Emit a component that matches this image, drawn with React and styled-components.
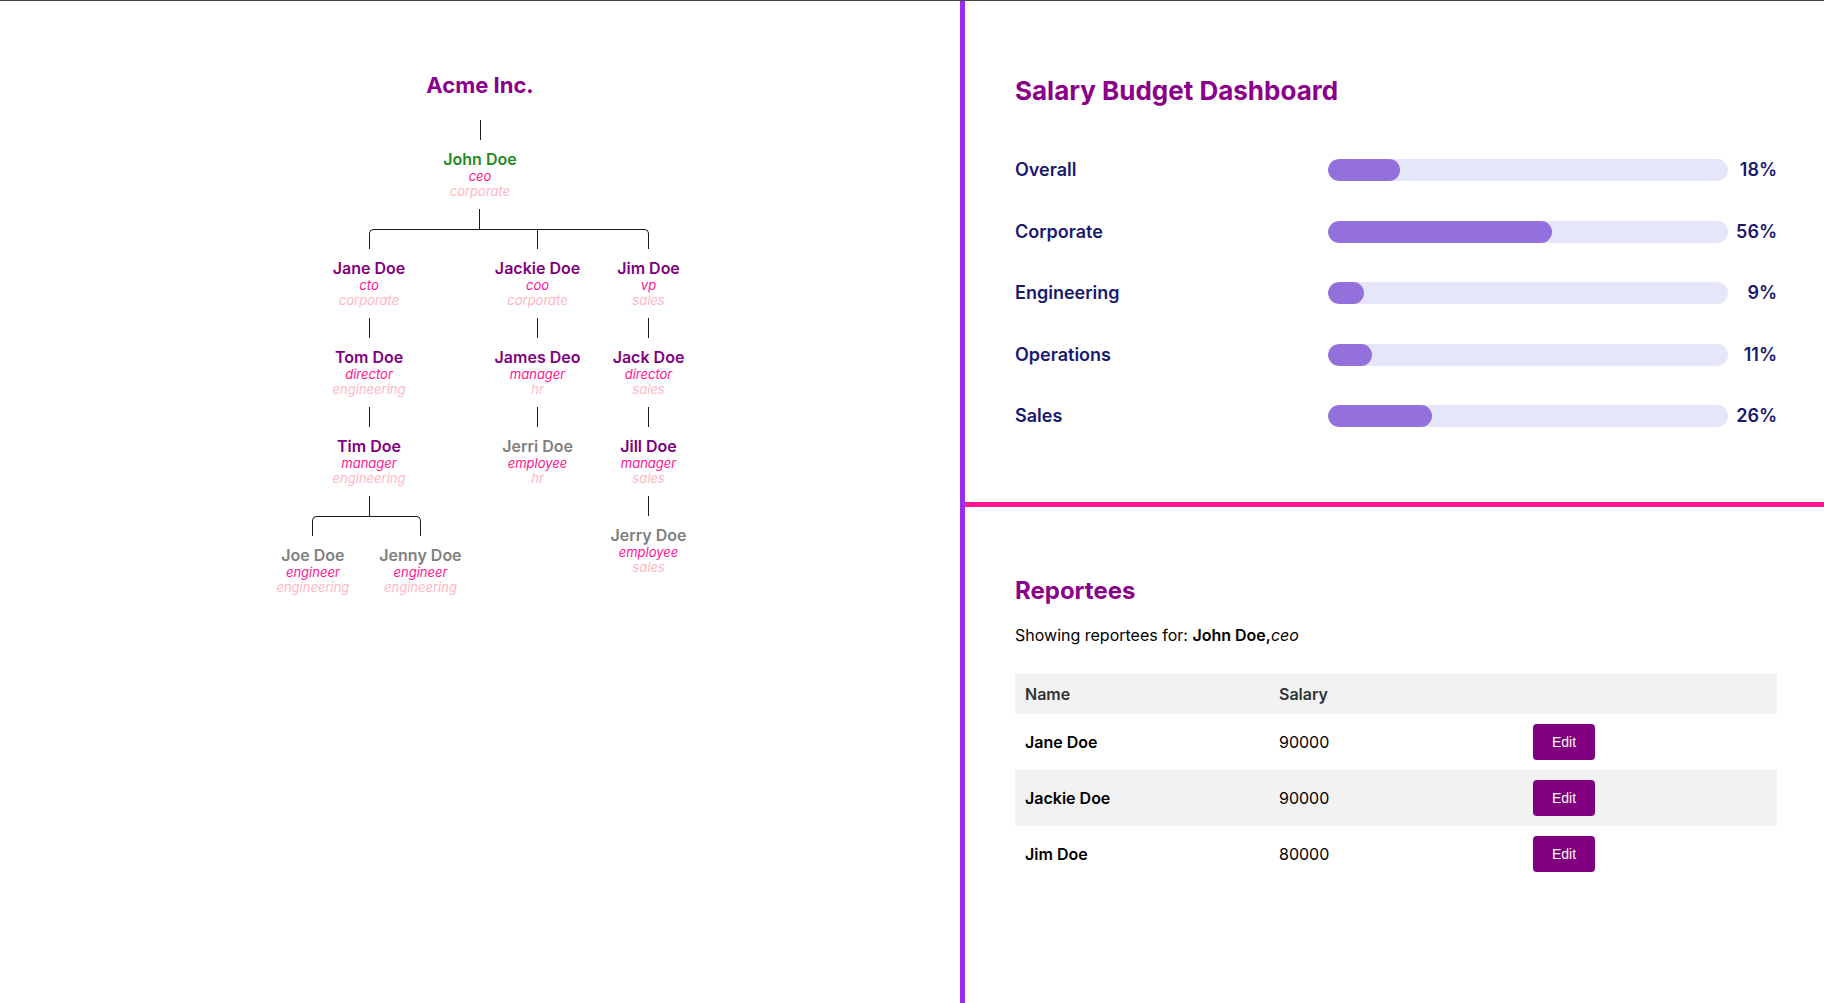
import React from 'react';
import styled, { createGlobalStyle } from 'styled-components';

const GlobalStyle = createGlobalStyle`
  html, body { margin: 0; padding: 0; background: #ffffff; }
  body { font-family: Inter, "Noto Sans", sans-serif; }
  * { box-sizing: border-box; }
`;

const LINE = '#1a1a1a';

const Page = styled.div`
  display: flex;
  min-height: 100vh;
  border-top: 1px solid #444444;
`;

const LeftPanel = styled.section`
  width: 960px;
  flex: none;
  display: flex;
  flex-direction: column;
  align-items: center;
  padding-top: 71px;
`;

const RightPanel = styled.section`
  flex: 1;
  display: flex;
  flex-direction: column;
  border-left: 5px solid rgb(151, 46, 237);
`;

const ChartTitle = styled.h1`
  margin: 0;
  padding-bottom: 21.5px;
  font-size: 22px;
  font-weight: 700;
  line-height: normal;
  color: #8b008b;
`;

const Stem = styled.div`
  width: 1px;
  height: 20px;
  background: ${LINE};
  flex: none;
`;

const NodeColumn = styled.div`
  display: flex;
  flex-direction: column;
  align-items: center;
  padding: 0 ${(p) => (p.$spaced ? 3 : 0)}px;
`;

const Label = styled.div`
  display: flex;
  flex-direction: column;
  align-items: center;
  padding: 10px 12px;
  white-space: nowrap;
`;

const NAME_COLORS = { selected: '#228b22', manager: '#800080', leaf: '#808080' };

const Name = styled.span`
  font-size: 16px;
  line-height: 19px;
  font-weight: 600;
  color: ${(p) => NAME_COLORS[p.$variant]};
`;

const Role = styled.span`
  font-size: 13px;
  line-height: 15px;
  font-style: italic;
  color: #ff1493;
`;

const Dept = styled.span`
  font-size: 13px;
  line-height: 15px;
  font-style: italic;
  color: #ffb6c1;
`;

const ChildrenRow = styled.div`
  display: flex;
  align-items: flex-start;
`;

const ChildWrap = styled.div`
  display: flex;
  flex-direction: column;
  align-items: stretch;
`;

const Connector = styled.div`
  display: flex;
  height: 20px;
`;

const Half = styled.div`
  flex: 1 1 0;
  border: 0 solid ${LINE};
  border-top-width: ${(p) => (p.$top ? '1px' : '0')};
  border-left-width: ${(p) => (p.$edge === 'left' ? '1px' : '0')};
  border-right-width: ${(p) => (p.$edge === 'right' ? '1px' : '0')};
  border-top-left-radius: ${(p) => (p.$round === 'tl' ? '5px' : '0')};
  border-top-right-radius: ${(p) => (p.$round === 'tr' ? '5px' : '0')};
`;

function ChildConnector({ index, count }) {
  const first = index === 0;
  const last = index === count - 1;
  if (first) {
    return (
      <Connector>
        <Half />
        <Half $top $edge="left" $round="tl" />
      </Connector>
    );
  }
  if (last) {
    return (
      <Connector>
        <Half $top $edge="right" $round="tr" />
        <Half />
      </Connector>
    );
  }
  return (
    <Connector>
      <Half $top $edge="right" />
      <Half $top />
    </Connector>
  );
}

function OrgNode({ node, spaced }) {
  const kids = node.children || [];
  const variant = node.selected ? 'selected' : kids.length ? 'manager' : 'leaf';
  return (
    <NodeColumn $spaced={spaced}>
      <Label>
        <Name $variant={variant}>{node.name}</Name>
        <Role>{node.role}</Role>
        <Dept>{node.dept}</Dept>
      </Label>
      {kids.length === 1 && (
        <>
          <Stem />
          <OrgNode node={kids[0]} />
        </>
      )}
      {kids.length > 1 && (
        <>
          <Stem />
          <ChildrenRow>
            {kids.map((k, i) => (
              <ChildWrap key={k.name}>
                <ChildConnector index={i} count={kids.length} />
                <OrgNode node={k} spaced />
              </ChildWrap>
            ))}
          </ChildrenRow>
        </>
      )}
    </NodeColumn>
  );
}

const tree = {
  name: 'John Doe', role: 'ceo', dept: 'corporate', selected: true,
  children: [
    { name: 'Jane Doe', role: 'cto', dept: 'corporate', children: [
      { name: 'Tom Doe', role: 'director', dept: 'engineering', children: [
        { name: 'Tim Doe', role: 'manager', dept: 'engineering', children: [
          { name: 'Joe Doe', role: 'engineer', dept: 'engineering' },
          { name: 'Jenny Doe', role: 'engineer', dept: 'engineering' },
        ] },
      ] },
    ] },
    { name: 'Jackie Doe', role: 'coo', dept: 'corporate', children: [
      { name: 'James Deo', role: 'manager', dept: 'hr', children: [
        { name: 'Jerri Doe', role: 'employee', dept: 'hr' },
      ] },
    ] },
    { name: 'Jim Doe', role: 'vp', dept: 'sales', children: [
      { name: 'Jack Doe', role: 'director', dept: 'sales', children: [
        { name: 'Jill Doe', role: 'manager', dept: 'sales', children: [
          { name: 'Jerry Doe', role: 'employee', dept: 'sales' },
        ] },
      ] },
    ] },
  ],
};

/* ---------- Right side ---------- */

const BudgetSection = styled.div`
  height: 506px;
  flex: none;
  border-bottom: 5px solid #ff1493;
  padding: 74px 47px 0 50px;
`;

const SectionTitle = styled.h2`
  margin: 0 0 ${(p) => p.$gap}px;
  font-size: ${(p) => p.$size}px;
  font-weight: 700;
  line-height: normal;
  color: #8b008b;
`;

const BudgetGrid = styled.div`
  display: grid;
  grid-template-columns: 313px 400px 1fr;
  row-gap: 39.5px;
  align-items: center;
`;

const BudgetLabel = styled.div`
  font-size: 18px;
  font-weight: 600;
  line-height: 22px;
  color: #191970;
`;

const Track = styled.div`
  height: 22px;
  border-radius: 11px;
  background: #e6e6fa;
  overflow: hidden;
`;

const Fill = styled.div`
  height: 100%;
  border-radius: 11px;
  background: #9370db;
`;

const BudgetValue = styled.div`
  font-size: 18px;
  font-weight: 600;
  line-height: 22px;
  text-align: right;
  color: #191970;
`;

const budgets = [
  { label: 'Overall', pct: 18 },
  { label: 'Corporate', pct: 56 },
  { label: 'Engineering', pct: 9 },
  { label: 'Operations', pct: 11 },
  { label: 'Sales', pct: 26 },
];

const ReporteesSection = styled.div`
  flex: 1;
  padding: 69px 47px 0 50px;
`;

const Subtitle = styled.p`
  margin: 0 0 29px;
  font-size: 16px;
  line-height: normal;
  color: #000000;
  b { font-weight: 600; }
  i { font-style: italic; }
`;

const Table = styled.table`
  width: 100%;
  border-collapse: collapse;
  table-layout: fixed;
`;

const HeadCell = styled.th`
  padding: 10px;
  text-align: left;
  font-size: 16px;
  font-weight: 600;
  line-height: normal;
  color: #333333;
`;

const Row = styled.tr`
  background: ${(p) => (p.$shaded ? '#f2f2f2' : '#ffffff')};
`;

const Cell = styled.td`
  padding: 10px;
  text-align: left;
  vertical-align: middle;
  font-size: 16px;
  line-height: normal;
  color: #000000;
  font-weight: ${(p) => (p.$strong ? 600 : 400)};
`;

const EditButton = styled.button`
  display: block;
  width: 62px;
  height: 36px;
  border: none;
  border-radius: 4px;
  background: #800080;
  color: #ffffff;
  font-family: "Liberation Sans", Arial, sans-serif;
  font-size: 14px;
  cursor: pointer;
`;

const reportees = [
  { name: 'Jane Doe', salary: 90000 },
  { name: 'Jackie Doe', salary: 90000 },
  { name: 'Jim Doe', salary: 80000 },
];

export default function App() {
  return (
    <>
      <GlobalStyle />
      <Page>
        <LeftPanel>
          <ChartTitle>Acme Inc.</ChartTitle>
          <Stem />
          <OrgNode node={tree} />
        </LeftPanel>
        <RightPanel>
          <BudgetSection>
            <SectionTitle $size={26} $gap={53}>Salary Budget Dashboard</SectionTitle>
            <BudgetGrid>
              {budgets.map((b) => (
                <React.Fragment key={b.label}>
                  <BudgetLabel>{b.label}</BudgetLabel>
                  <Track>
                    <Fill style={{ width: `${b.pct}%` }} />
                  </Track>
                  <BudgetValue>{b.pct}%</BudgetValue>
                </React.Fragment>
              ))}
            </BudgetGrid>
          </BudgetSection>
          <ReporteesSection>
            <SectionTitle $size={24} $gap={20}>Reportees</SectionTitle>
            <Subtitle>
              Showing reportees for: <b>John Doe,</b><i>ceo</i>
            </Subtitle>
            <Table>
              <thead>
                <Row $shaded>
                  <HeadCell>Name</HeadCell>
                  <HeadCell>Salary</HeadCell>
                  <HeadCell />
                </Row>
              </thead>
              <tbody>
                {reportees.map((r, i) => (
                  <Row key={r.name} $shaded={i % 2 === 1}>
                    <Cell $strong>{r.name}</Cell>
                    <Cell>{r.salary}</Cell>
                    <Cell>
                      <EditButton>Edit</EditButton>
                    </Cell>
                  </Row>
                ))}
              </tbody>
            </Table>
          </ReporteesSection>
        </RightPanel>
      </Page>
    </>
  );
}
